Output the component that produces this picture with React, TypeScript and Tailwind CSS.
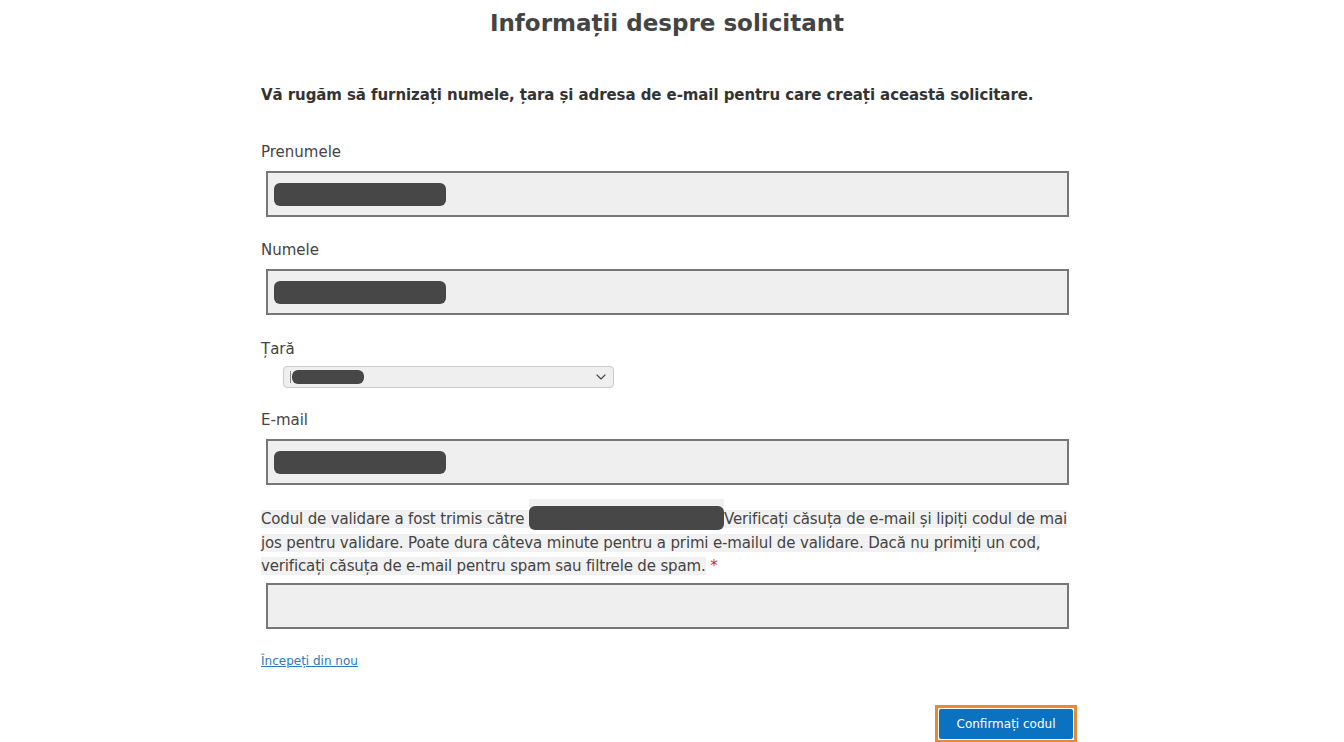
import { ChevronDown } from 'lucide-react';

const FONT = "font-['DejaVu_Sans',Verdana,sans-serif]";

function Redacted({ className = '' }: { className?: string }) {
  return <span className={`block rounded-md bg-[#474747] ${className}`} />;
}

function TextField({ label, filled = true }: { label: string; filled?: boolean }) {
  return (
    <div className="flex flex-col">
      <label className="h-6 text-[15px] leading-6 text-[#444]">{label}</label>
      <div className="mt-[7px] ml-[5px] flex h-[46px] w-[803px] items-center border-2 border-[#777] bg-[#efefef] px-[6px]">
        {filled && <Redacted className="h-[23px] w-[172px]" />}
      </div>
    </div>
  );
}

export default function App() {
  return (
    <div className={`min-h-screen bg-white ${FONT} text-[#444]`}>
      <div className="flex justify-center pr-[10px]">
        <div className="w-[812px] pt-[7px]">
          <h1 className="text-center text-[23px] leading-8 font-bold text-[#444]">
            Informații despre solicitant
          </h1>

          <p className="mt-[44px] h-6 text-[15px] leading-6 font-bold tracking-[-0.08px] text-[#333]">
            Vă rugăm să furnizați numele, țara și adresa de e-mail pentru care creați această solicitare.
          </p>

          <div className="mt-[33px]">
            <TextField label="Prenumele" />
          </div>
          <div className="mt-[21px]">
            <TextField label="Numele" />
          </div>

          <div className="mt-[22px] flex flex-col">
            <label className="h-6 text-[15px] leading-6">Țară</label>
            <div className="mt-[5px] ml-[22px] flex h-[22px] w-[331px] items-center justify-between rounded-sm border border-[#c9c9c9] bg-[#efefef] pr-[4px] pl-[6px]">
              <span className="flex items-center gap-[1px]">
                <span className="h-[12px] w-px bg-[#888]" />
                <Redacted className="h-[14px] w-[72px] rounded-[4px]" />
              </span>
              <ChevronDown className="size-[16px] text-[#444]" strokeWidth={1.6} />
            </div>
          </div>

          <div className="mt-[20px]">
            <TextField label="E-mail" />
          </div>

          <p className="mt-[21px] w-[816px] text-[15px] leading-[23.5px] tracking-[-0.15px] text-[#444]">
            <span className="bg-[#f1f1f1] box-decoration-clone">
              Codul de validare a fost trimis către{' '}
              <span className="relative inline-block h-[24px] w-[195px] align-[-6px]">
                <span className="absolute -top-[7px] left-0 h-[8px] w-full bg-[#f0f0f0]" />
                <span className="absolute inset-0 rounded-md bg-[#474747]" />
              </span>
              Verificați căsuța de e-mail și lipiți codul de mai jos pentru validare. Poate dura câteva minute pentru a primi e-mailul de validare. Dacă nu primiți un cod, verificați căsuța de e-mail pentru spam sau filtrele de spam.
            </span>{' '}
            <span className="text-[#c0392b]">*</span>
          </p>

          <div className="mt-[4px] ml-[5px] h-[46px] w-[803px] border-2 border-[#777] bg-[#efefef]" />

          <a
            href="#"
            className="mt-[23px] block w-fit text-[12px] leading-[18px] text-[#2a7ab8] underline"
          >
            Începeți din nou
          </a>

          <div className="mt-[35px] flex justify-end">
            <button className="mr-[-4px] border-[3px] border-[#e8883a] bg-white p-px">
              <span className="flex h-[30px] w-[134px] items-center justify-center rounded-[2px] bg-[#0b72c1] text-[12px] text-white">
                Confirmați codul
              </span>
            </button>
          </div>
        </div>
      </div>
    </div>
  );
}
